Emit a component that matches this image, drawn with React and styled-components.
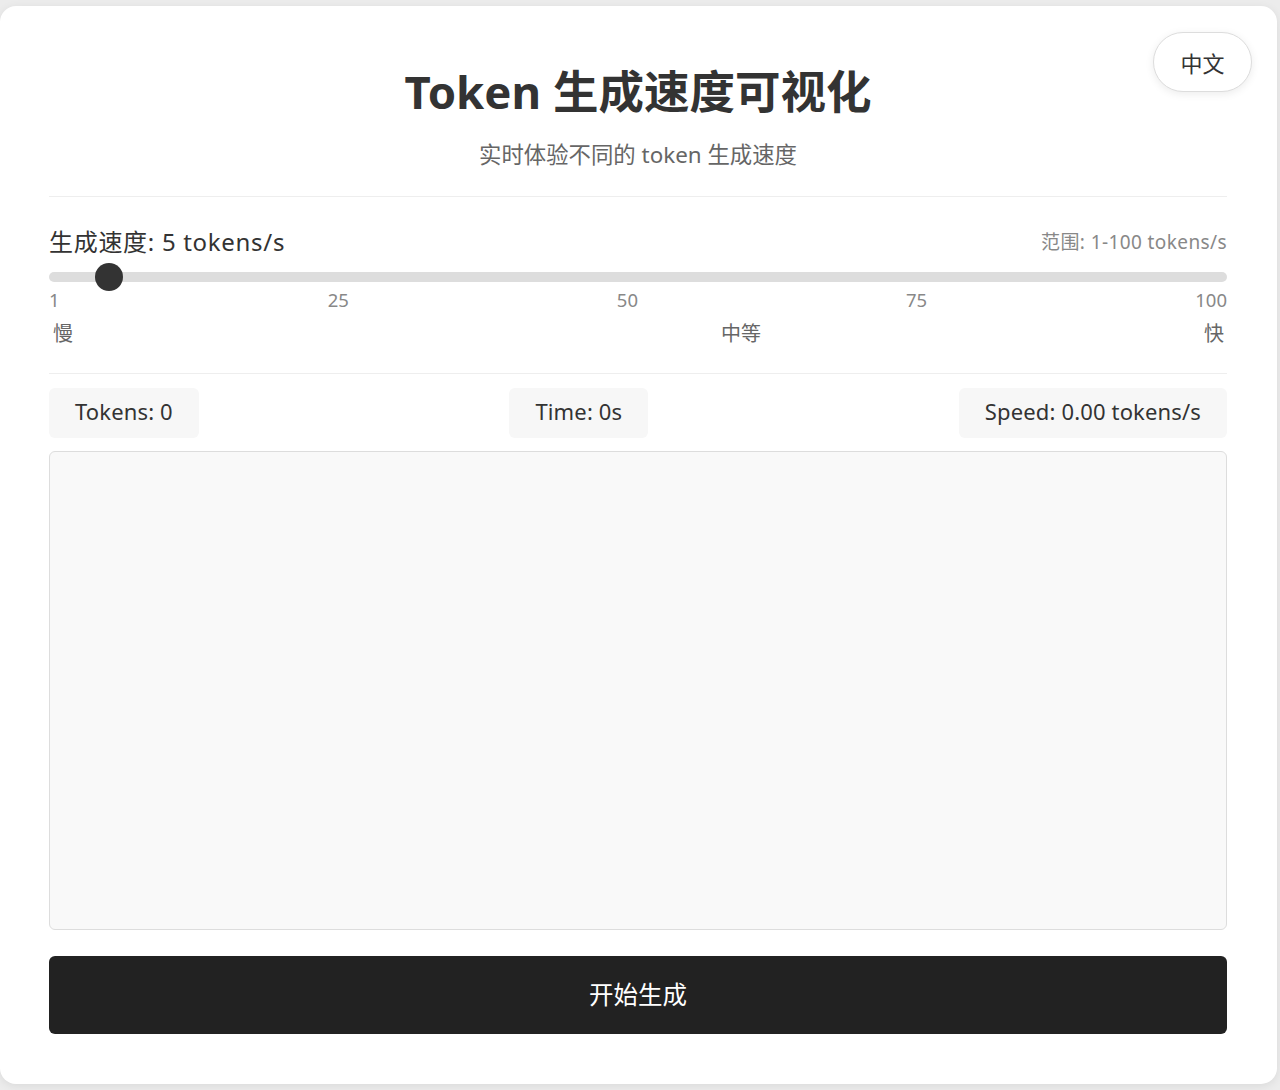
import React, { useState } from "react";
import styled, { createGlobalStyle } from "styled-components";

const GlobalStyle = createGlobalStyle`
  * { box-sizing: border-box; }
  html, body { margin: 0; padding: 0; background: #ececec; }
  body {
    font-family: "Noto Sans", "Noto Sans CJK SC", sans-serif;
    color: #333;
  }
`;

const Page = styled.div`
  padding: 6px 3px 6px 0;
`;

const Card = styled.main`
  position: relative;
  width: 1277px;
  background: #fff;
  border-radius: 16px;
  box-shadow: 0 2px 10px rgba(0, 0, 0, 0.08);
  padding: 48px 50px 50px 49px;
  display: flex;
  flex-direction: column;
`;

const LangButton = styled.button`
  position: absolute;
  top: 26px;
  right: 25px;
  width: 99px;
  height: 60px;
  border: 1px solid #ddd;
  border-radius: 30px;
  background: #fff;
  box-shadow: 0 2px 8px rgba(0, 0, 0, 0.08);
  font-family: "Noto Sans CJK SC", sans-serif;
  font-size: 22px;
  color: #333;
  cursor: pointer;
`;

const Header = styled.header`
  text-align: center;
  padding-bottom: 26px;
  border-bottom: 1px solid #eee;
`;

const Title = styled.h1`
  margin: 9px 0 0;
  font-size: 45.5px;
  line-height: 56px;
  font-weight: 700;
  color: #333;
`;

const Subtitle = styled.p`
  margin: 21px 0 0;
  font-size: 22.4px;
  line-height: 30px;
  color: #666;
`;

const Controls = styled.section`
  padding-top: 29px;
  padding-bottom: 25px;
  border-bottom: 1px solid #eee;
`;

const ControlHead = styled.div`
  display: flex;
  justify-content: space-between;
  align-items: center;
`;

const SpeedLabel = styled.div`
  font-size: 24px;
  line-height: 32px;
  letter-spacing: 0.7px;
  color: #333;
`;

const RangeNote = styled.div`
  font-size: 19px;
  line-height: 32px;
  letter-spacing: 0.4px;
  color: #888;
`;

const Slider = styled.input`
  -webkit-appearance: none;
  appearance: none;
  display: block;
  width: 100%;
  height: 10px;
  margin: 14px 0 9px;
  border-radius: 5px;
  background: #ddd;
  outline: none;

  &::-webkit-slider-thumb {
    -webkit-appearance: none;
    appearance: none;
    width: 28px;
    height: 28px;
    border-radius: 50%;
    background: #333;
    cursor: pointer;
  }
  &::-moz-range-thumb {
    width: 28px;
    height: 28px;
    border: none;
    border-radius: 50%;
    background: #333;
  }
`;

const Ticks = styled.div`
  display: flex;
  justify-content: space-between;
  font-size: 18.5px;
  line-height: 18px;
  color: #888;
`;

const SpeedWords = styled.div`
  display: flex;
  margin-top: 11px;
  padding: 0 3px 0 4px;
  font-size: 20px;
  line-height: 28px;
  color: #666;
`;

const Word = styled.span`
  margin-left: ${(p) => p.$offset || "0"};
`;

const Stats = styled.div`
  display: flex;
  justify-content: space-between;
  margin-top: 14px;
`;

const Stat = styled.div`
  background: #f7f7f7;
  border-radius: 6px;
  padding: 10px 26px 14px;
  font-size: 22px;
  line-height: 26px;
  letter-spacing: 0.15px;
  color: #333;
`;

const Output = styled.div`
  margin-top: 13px;
  height: 479px;
  background: #f9f9f9;
  border: 1px solid #ddd;
  border-radius: 6px;
`;

const StartButton = styled.button`
  margin-top: 26px;
  height: 78px;
  width: 100%;
  padding: 0 0 4px;
  border: none;
  border-radius: 6px;
  background: #222;
  color: #fff;
  font-family: "Noto Sans CJK SC", sans-serif;
  font-size: 24.5px;
  cursor: pointer;
`;

export default function App() {
  const [speed, setSpeed] = useState(5);
  return (
    <>
      <GlobalStyle />
      <Page>
        <Card>
          <LangButton>中文</LangButton>
          <Header>
            <Title>Token 生成速度可视化</Title>
            <Subtitle>实时体验不同的 token 生成速度</Subtitle>
          </Header>
          <Controls>
            <ControlHead>
              <SpeedLabel>生成速度: {speed} tokens/s</SpeedLabel>
              <RangeNote>范围: 1-100 tokens/s</RangeNote>
            </ControlHead>
            <Slider
              type="range"
              min="1"
              max="100"
              value={speed}
              onChange={(e) => setSpeed(Number(e.target.value))}
            />
            <Ticks>
              <span>1</span>
              <span>25</span>
              <span>50</span>
              <span>75</span>
              <span>100</span>
            </Ticks>
            <SpeedWords>
              <Word>慢</Word>
              <Word $offset="648px">中等</Word>
              <Word $offset="auto">快</Word>
            </SpeedWords>
          </Controls>
          <Stats>
            <Stat>Tokens: 0</Stat>
            <Stat>Time: 0s</Stat>
            <Stat>Speed: 0.00 tokens/s</Stat>
          </Stats>
          <Output />
          <StartButton>开始生成</StartButton>
        </Card>
      </Page>
    </>
  );
}
